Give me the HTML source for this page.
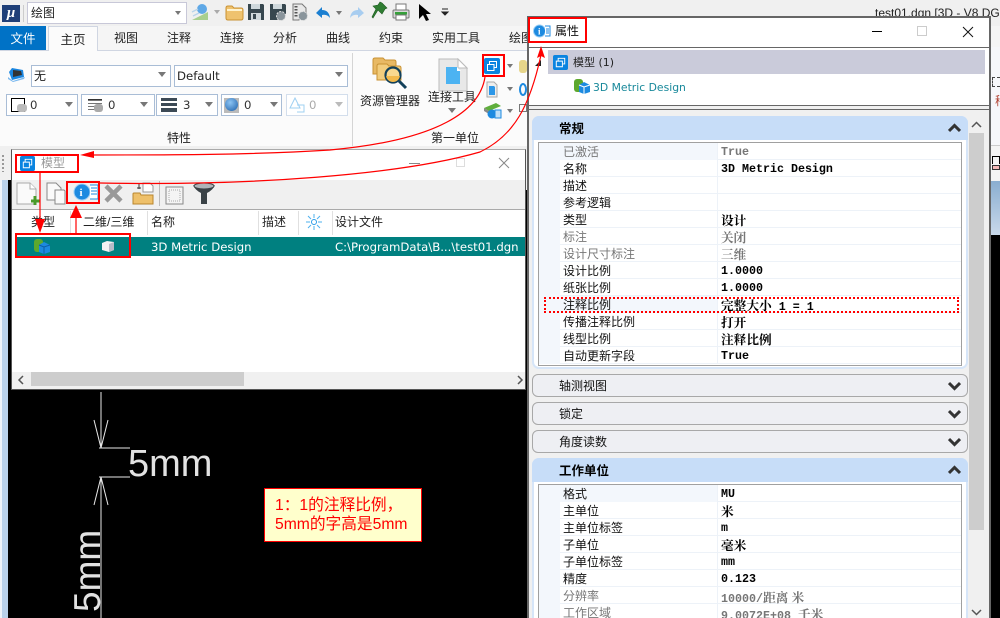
<!DOCTYPE html>
<html><head><meta charset="utf-8">
<style>
html,body{margin:0;padding:0}
body{width:1000px;height:618px;overflow:hidden;position:relative;background:#000;font:12px/17px "DejaVu Sans","Noto Sans CJK SC",sans-serif;color:#222}
.a{position:absolute}
.t{position:absolute;white-space:nowrap;font:12px/16px "Liberation Sans","Noto Sans CJK SC",sans-serif}
.d{font-family:"DejaVu Sans","Noto Sans CJK SC",sans-serif;font-size:11.7px}
.box{position:absolute;background:#fff;border:1px solid #a9bdd6;box-sizing:border-box}
.tri{position:absolute;width:0;height:0;border-left:4px solid transparent;border-right:4px solid transparent;border-top:5px solid #777}
.red{position:absolute;border:2px solid #f00;box-sizing:border-box}
.hd{position:absolute;left:532px;width:436px;height:24px;border-radius:7px 7px 0 0;background:#c7ddf8;font:bold 12.5px/24px "Noto Sans CJK SC",sans-serif;color:#000;text-indent:27px}
.cl{position:absolute;left:532px;width:436px;height:23px;background:#eeeff3;border:1px solid #a8a8a8;border-radius:6px;box-sizing:border-box;font:12px/21px "Noto Sans CJK SC",sans-serif;color:#111;text-indent:26px}
.chev{position:absolute;left:948px}
.tb{position:absolute;left:538px;width:424px;border:1px solid #a0a0a0;box-sizing:border-box;background:#fff;overflow:hidden}
.r{height:17px;position:relative;border-bottom:1px solid #edf2f8;box-sizing:border-box;overflow:visible}
.r:before{content:"";position:absolute;left:0;top:0;width:21px;height:17px;background:#f3f7fc}
.r:after{content:"";position:absolute;left:178px;top:0;width:1px;height:17px;background:#edf2f8}
.r b{position:absolute;left:24px;top:0;font:12px/17px "Noto Sans CJK SC",sans-serif;color:#111;white-space:nowrap}
.r i{position:absolute;left:182px;top:1px;font:bold 11.67px/17px "Liberation Mono",monospace;color:#000;white-space:nowrap;z-index:1}
.r i.c{top:0;font:bold 12.7px/17px "Noto Serif CJK SC",serif}
.r i span{font:bold 12.7px/17px "Noto Serif CJK SC",serif}
.r i.c span{font:bold 11.67px/17px "Liberation Mono",monospace}
.r.g b,.r.g i{color:#777}
.r.s:before{width:178px;background:#f3f7fc}
</style></head>
<body>
<!-- App background -->
<div class="a" style="left:0;top:0;width:1000px;height:26px;background:#f0f0f0"></div>
<div class="a" style="left:0;top:26px;width:1000px;height:24px;background:#f5f5f5"></div>
<div class="a" style="left:0;top:50px;width:1000px;height:96px;background:#fbfbfb;border-top:1px solid #d0d6e2;box-sizing:border-box"></div>
<div class="a" style="left:0;top:146px;width:1000px;height:44px;background:#f0f0f0"></div>
<div class="a" style="left:0;top:180px;width:8px;height:438px;background:#b9d1ea"></div>
<div class="a" style="left:0;top:180px;width:2px;height:438px;background:#eef3f9"></div>
<div class="a" style="left:8px;top:180px;width:6px;height:438px;background:#000"></div>
<div class="a" style="left:2px;top:155px;width:2px;height:17px;background:repeating-linear-gradient(#999 0 2px,transparent 2px 4px)"></div>
<div class="a" style="left:990px;top:47px;width:10px;height:188px;background:#f6f7fa"></div>
<div class="a" style="left:990px;top:145px;width:10px;height:36px;background:#f4f4f4;border-top:1px solid #ccc;box-sizing:border-box"></div>
<div class="a" style="left:990px;top:181px;width:10px;height:54px;background:linear-gradient(#8aaed0,#c9d9ea)"></div>
<div class="a" style="left:992px;top:156px;width:8px;height:8px;border:1px solid #000;border-bottom:0;box-sizing:border-box"></div>
<div class="a" style="left:992px;top:165px;width:8px;height:5px;background:#f3b8b8;border:1px solid #333;box-sizing:border-box"></div>
<div class="a" style="left:992px;top:77px;width:8px;height:10px;border:1px dashed #444;border-right:0;box-sizing:border-box"></div>
<div class="t" style="left:995px;top:93px;color:#b04030">稍</div>
<div class="t" style="left:875px;top:5px;color:#222">test01.dgn [3D - V8 DGN</div>

<!-- Quick access -->
<div class="a" style="left:2px;top:5px;width:18px;height:17px;background:#1f3f78;color:#fff;font:italic bold 15px/16px 'Liberation Serif',serif;text-align:center">μ</div>
<div class="a" style="left:23px;top:5px;width:1px;height:17px;background:#ccc"></div>
<div class="a" style="left:27px;top:2px;width:160px;height:22px;background:#fff;border:1px solid #c8c8d8;box-sizing:border-box"></div>
<div class="t" style="left:31px;top:5px">绘图</div>
<div class="tri" style="left:175px;top:11px;border-left-width:3px;border-right-width:3px;border-top-width:4px"></div>
<svg class="a" style="left:190px;top:0" width="270" height="26" viewBox="0 0 270 26">
<path d="M2 20 L18 20 L18 12 Z" fill="#a9cf8e"/><circle cx="12" cy="9" r="5" fill="#5fa8e6"/><path d="M2 12l6-3M3 16l6-3" stroke="#b9d4ea" stroke-width="1.500"/>
<path d="M24 10h6l-3 4z" fill="#aaa"/>
<path d="M36 8q0-2 2-2h4l2 2h7q2 0 2 2v8q0 2-2 2H38q-2 0-2-2z" fill="#efc26e" stroke="#c99234"/><path d="M37 10h15" stroke="#fff3cf" stroke-width="2"/>
<path d="M58 4h15l1 1v15H58z" fill="#37474f"/><rect x="61" y="4" width="9" height="5" fill="#cfd8dc"/><rect x="61" y="13" width="10" height="7" fill="#cfd8dc"/><rect x="63" y="14" width="3" height="5" fill="#37474f"/>
<path d="M80 4h15l1 1v9h-4l-3 6H80z" fill="#37474f"/><rect x="83" y="4" width="9" height="5" fill="#cfd8dc"/><circle cx="91" cy="16" r="4.500" fill="#8a959c" stroke="#e0e0e0" stroke-dasharray="2 1.2"/>
<path d="M103 4h9l4 4v6h-5l-2 6h-6z" fill="#e8e8e8" stroke="#777"/><path d="M106 6v12" stroke="#555" stroke-dasharray="1.500 1.500" stroke-width="3"/><circle cx="113" cy="16" r="4.500" fill="#8a959c" stroke="#e0e0e0" stroke-dasharray="2 1.2"/>
<path d="M126 13 l6-6v3q7 0 8 8q-3-4-8-3v3z" fill="#1b7fd1"/>
<path d="M146 11h6l-3 4z" fill="#777"/>
<path d="M174 13 l-6-6v3q-7 0-8 8q3-4 8-3v3z" fill="#a8cdf0"/>
<path d="M192 3 l5 5-2 1-3 5-4-4-5 8-1-1 4-8-3-3 5-1 2-3z" fill="#2f7d32" stroke="#1d5a20" stroke-width=".6"/>
<rect x="206" y="4" width="10" height="6" fill="#fff" stroke="#777"/><rect x="203" y="10" width="16" height="8" rx="1" fill="#d8d8d8" stroke="#777"/><rect x="205" y="12" width="12" height="2.500" fill="#35a03a"/><rect x="206" y="15" width="10" height="5" fill="#fff" stroke="#777"/>
<path d="M229 4 v15 l4-4 3 6 3-1-3-6h5z" fill="#000"/>
<path d="M252 9h6M252 12h6l-3 3z" stroke="#222" fill="#222"/>
</svg>

<!-- Tabs -->
<div class="a" style="left:0;top:26px;width:46px;height:24px;background:#0072c6;color:#fff;font:12.500px/24px 'Noto Sans CJK SC',sans-serif;text-align:center">文件</div>
<div class="a" style="left:48px;top:26px;width:50px;height:25px;background:#fbfbfb;border:1px solid #d0d6e2;border-bottom:0;box-sizing:border-box;font:12.500px/23px 'Noto Sans CJK SC',sans-serif;text-align:center;color:#222">主页</div>
<div class="t" style="left:114px;top:30px">视图</div>
<div class="t" style="left:167px;top:30px">注释</div>
<div class="t" style="left:220px;top:30px">连接</div>
<div class="t" style="left:273px;top:30px">分析</div>
<div class="t" style="left:326px;top:30px">曲线</div>
<div class="t" style="left:379px;top:30px">约束</div>
<div class="t" style="left:432px;top:30px">实用工具</div>
<div class="t" style="left:509px;top:30px">绘图</div>

<!-- Ribbon -->
<svg class="a" style="left:8px;top:67px" width="18" height="16" viewBox="0 0 18 16"><path d="M4 1l11 2 1 7-12 3-3-8z" fill="#1a86e0"/><path d="M5 3l8 1 1 4-9 2z" fill="#333"/><path d="M0 10l5 4 12-4-1 2-11 3-5-3z" fill="#7ab8ef"/></svg>
<div class="box" style="left:31px;top:65px;width:140px;height:22px"></div>
<div class="t" style="left:34px;top:68px">无</div>
<div class="tri" style="left:158px;top:72px"></div>
<div class="box" style="left:174px;top:65px;width:174px;height:22px"></div>
<div class="t d" style="left:177px;top:68px">Default</div>
<div class="tri" style="left:335px;top:72px"></div>

<div class="box" style="left:6px;top:94px;width:72px;height:22px"></div>
<div class="a" style="left:11px;top:98px;width:14px;height:14px;border:1px solid #000;box-sizing:border-box;background:#fff"></div>
<div class="a" style="left:17px;top:104px;width:10px;height:8px;background:#bbb;border-radius:3px"></div>
<div class="t d" style="left:30px;top:97px;color:#333">0</div><div class="tri" style="left:65px;top:102px"></div>
<div class="box" style="left:81px;top:94px;width:74px;height:22px"></div>
<div class="a" style="left:88px;top:99px;width:14px;height:12px;border-top:1px solid #333;background:repeating-linear-gradient(#777 0 1px,transparent 1px 3px)"></div>
<div class="a" style="left:94px;top:104px;width:9px;height:8px;background:#aaa;border-radius:3px"></div>
<div class="t d" style="left:108px;top:97px;color:#333">0</div><div class="tri" style="left:140px;top:102px"></div>
<div class="box" style="left:156px;top:94px;width:62px;height:22px"></div>
<div class="a" style="left:161px;top:98px;width:16px;height:3px;background:#3c4a55"></div>
<div class="a" style="left:161px;top:103px;width:16px;height:3px;background:#3c4a55"></div>
<div class="a" style="left:161px;top:108px;width:16px;height:4px;background:#3c4a55"></div>
<div class="t d" style="left:183px;top:97px;color:#333">3</div><div class="tri" style="left:205px;top:102px"></div>
<div class="box" style="left:221px;top:94px;width:61px;height:22px"></div>
<div class="a" style="left:224px;top:98px;width:15px;height:15px;background:#bbb"></div>
<div class="a" style="left:225px;top:98px;width:13px;height:13px;border-radius:50%;background:radial-gradient(circle at 40% 35%,#8cc4f4,#1c5fa8)"></div>
<div class="t d" style="left:244px;top:97px;color:#333">0</div><div class="tri" style="left:270px;top:102px"></div>
<div class="box" style="left:286px;top:94px;width:62px;height:22px;border-color:#d3deec"></div>
<svg class="a" style="left:289px;top:97px" width="16" height="16" viewBox="0 0 16 16"><path d="M6 1 L11 11 H1 Z" fill="none" stroke="#9fd0f2"/><path d="M8 8h7v7H8" fill="none" stroke="#9fd0f2"/></svg>
<div class="t d" style="left:309px;top:97px;color:#aaa">0</div><div class="tri" style="left:335px;top:102px;border-top-color:#bbb"></div>
<div class="t" style="left:167px;top:130px">特性</div>
<div class="a" style="left:352px;top:53px;width:1px;height:93px;background:#d5d5d5"></div>

<svg class="a" style="left:372px;top:56px" width="36" height="36" viewBox="0 0 36 36">
<path d="M1 4q0-2 2-2h8l2 2h9q2 0 2 2v12H1z" fill="#e8b964" stroke="#c99234"/>
<path d="M5 10q0-2 2-2h8l2 2h10q2 0 2 2v12H5z" fill="#f2cd7d" stroke="#c99234"/>
<circle cx="21" cy="19" r="7.500" fill="#f8d88f" stroke="#12405a" stroke-width="2.200"/><path d="M14 20h14v-1a7 7 0 0 1-14 0z" fill="#f2b94c"/>
<path d="M27 25l7 7" stroke="#12405a" stroke-width="3"/></svg>
<div class="t" style="left:360px;top:93px">资源管理器</div>
<svg class="a" style="left:438px;top:58px" width="30" height="34" viewBox="0 0 30 34"><path d="M1 1h19l9 9v23H1z" fill="#e8e8e8" stroke="#bbb"/><path d="M20 1v9h9z" fill="#fff" stroke="#bbb"/><path d="M8 9h11l3 3v14H8z" fill="#4cb3f2"/><path d="M19 9v4h4z" fill="#fff"/></svg>
<div class="t" style="left:428px;top:89px">连接工具</div>
<div class="tri" style="left:448px;top:108px"></div>
<svg class="a" style="left:484px;top:58px" width="16" height="16" viewBox="0 0 16 16"><rect width="16" height="16" rx="2" fill="#0a84e0"/><path d="M3.500 6.500h6.500v6H3.500zM5.500 6.500V3.500h7v6h-2.500" fill="none" stroke="#fff"/></svg>
<div class="tri" style="left:507px;top:64px;border-left-width:3px;border-right-width:3px;border-top-width:4px"></div>
<svg class="a" style="left:486px;top:81px" width="12" height="17" viewBox="0 0 12 17"><path d="M1 1h7l3 3v12H1z" fill="#eee" stroke="#aaa"/><path d="M3 5h5l1 1v8H3z" fill="#2c97e8"/></svg>
<div class="tri" style="left:507px;top:87px;border-left-width:3px;border-right-width:3px;border-top-width:4px"></div>
<svg class="a" style="left:484px;top:103px" width="18" height="16" viewBox="0 0 18 16"><path d="M0 5L12 0l5 3L5 8z" fill="#5fae3c"/><path d="M0 5l5 3v3L0 8z" fill="#888"/><circle cx="8" cy="11" r="4.500" fill="#1c8ae0"/><rect x="11" y="7" width="6" height="8" fill="#bfe0f8" stroke="#1c8ae0"/></svg>
<div class="tri" style="left:507px;top:109px;border-left-width:3px;border-right-width:3px;border-top-width:4px"></div>
<div class="a" style="left:519px;top:60px;width:8px;height:13px;background:#e6d58a;border-radius:3px"></div>
<div class="a" style="left:519px;top:83px;width:8px;height:13px;border:2px solid #1c8ae0;border-radius:50%;box-sizing:border-box"></div>
<div class="a" style="left:519px;top:104px;width:8px;height:8px;border:1px solid #777;box-sizing:border-box"></div>
<div class="t" style="left:431px;top:130px">第一单位</div>

<!-- Model window -->
<div class="a" style="left:11px;top:149px;width:515px;height:241px;background:#fff;border:1px solid #555;border-top-color:#aaa;box-sizing:border-box"></div>
<svg class="a" style="left:20px;top:156px" width="15" height="15" viewBox="0 0 16 16"><rect width="16" height="16" rx="2" fill="#0a84e0"/><path d="M3.500 6.500h6.500v6H3.500zM5.500 6.500V3.500h7v6h-2.500" fill="none" stroke="#fff"/></svg>
<div class="t" style="left:41px;top:155px;color:#999">模型</div>
<div class="a" style="left:409px;top:163px;width:11px;height:1px;background:#888"></div>
<div class="a" style="left:456px;top:158px;width:9px;height:9px;border:1px solid #ddd;box-sizing:border-box"></div>
<svg class="a" style="left:498px;top:157px" width="12" height="12"><path d="M1 1l10 10M11 1L1 11" stroke="#888" fill="none"/></svg>
<div class="a" style="left:12px;top:180px;width:513px;height:29px;background:#f0f0f0;border-bottom:1px solid #aaa"></div>
<svg class="a" style="left:14px;top:181px" width="210" height="26" viewBox="0 0 210 26">
<path d="M3 2h13l6 6v15H3z" fill="#fafafa" stroke="#aaa"/><path d="M16 2v6h6" fill="#fff" stroke="#aaa"/><path d="M21 15v9M17 20h9" stroke="#4a9a2a" stroke-width="3"/>
<path d="M33 2h9l5 5v12H33z" fill="#fafafa" stroke="#888"/><path d="M41 9h9l1 1v13H41z" fill="#fafafa" stroke="#888"/>
<circle cx="68" cy="11" r="8" fill="#1c8ae0" stroke="#9ccff5"/><text x="65.500" y="15" font-family="Liberation Serif" font-weight="bold" font-size="11" fill="#fff">i</text><path d="M76 4h8v14h-8" fill="#fff" stroke="#1c8ae0"/><path d="M77 7h6M77 10h6M77 13h6" stroke="#1c8ae0"/>
<path d="M92 5l15 15M107 5L92 20" stroke="#999" stroke-width="4.500"/>
<path d="M119 13q0-1 1-1h6l1 2h12v9h-20z" fill="#eec06a" stroke="#b9862e"/><path d="M129 2h7l3 3v6h-10z" fill="#fff" stroke="#999"/><path d="M125 3v5M123 7h4" stroke="#333" fill="none"/>
<path d="M145.500 0v25" stroke="#bbb"/>
<rect x="152" y="6" width="17" height="17" fill="#f4f4f4" stroke="#888"/><rect x="155" y="9" width="11" height="11" fill="none" stroke="#aaa" stroke-dasharray="1 1"/>
<path d="M179 4q11 6 22 0q-2 5-8 8v11h-6V12q-6-3-8-8z" fill="#3a4247"/><ellipse cx="190" cy="5" rx="10" ry="3" fill="#aeb4b8" stroke="#3a4247"/>
</svg>
<div class="a" style="left:12px;top:210px;width:513px;height:26px;background:#fff"></div>
<div class="t" style="left:31px;top:214px">类型</div>
<div class="t" style="left:83px;top:214px">二维/三维</div>
<div class="t" style="left:151px;top:214px">名称</div>
<div class="t" style="left:262px;top:214px">描述</div>
<div class="t" style="left:335px;top:214px">设计文件</div>
<svg class="a" style="left:306px;top:214px" width="16" height="16" viewBox="0 0 16 16"><circle cx="8" cy="8" r="2.500" fill="none" stroke="#2a9ce8"/><path d="M8 0v4M8 12v4M0 8h4M12 8h4M2 2l3 3M11 11l3 3M14 2l-3 3M5 11l-3 3" stroke="#4eb1ee"/></svg>
<div class="a" style="left:70px;top:211px;width:1px;height:24px;background:#e0e0e0"></div>
<div class="a" style="left:147px;top:211px;width:1px;height:24px;background:#e0e0e0"></div>
<div class="a" style="left:258px;top:211px;width:1px;height:24px;background:#e0e0e0"></div>
<div class="a" style="left:298px;top:211px;width:1px;height:24px;background:#e0e0e0"></div>
<div class="a" style="left:332px;top:211px;width:1px;height:24px;background:#e0e0e0"></div>
<div class="a" style="left:16px;top:237px;width:509px;height:19px;background:#008080"></div>
<svg class="a" style="left:33px;top:238px" width="18" height="16" viewBox="0 0 18 16"><rect x="1" y="1" width="9" height="13" rx="3" fill="#5da82e"/><path d="M6 7l5-3 6 3v7l-6 2-5-2z" fill="#1c8ae0"/><path d="M6 7l5 2 6-2M11 9v7" stroke="#0b5ea8" fill="none"/></svg>
<svg class="a" style="left:101px;top:240px" width="14" height="13" viewBox="0 0 14 13"><path d="M1 3l5-2 7 1v8l-5 2-7-2z" fill="#f2f2f2"/><path d="M8 4l5-2v8l-5 2z" fill="#b8bcc8"/></svg>
<div class="t d" style="left:151px;top:239px;color:#fff">3D Metric Design</div>
<div class="t d" style="left:335px;top:239px;color:#fff">C:\ProgramData\B...\test01.dgn</div>
<!-- scrollbar -->
<div class="a" style="left:12px;top:372px;width:513px;height:17px;background:#f0f0f0"></div>
<div class="a" style="left:31px;top:372px;width:213px;height:14px;background:#cdcdcd"></div>
<svg class="a" style="left:16px;top:375px" width="10" height="10"><path d="M7 1L3 5l4 4" stroke="#555" stroke-width="1.500" fill="none"/></svg>
<svg class="a" style="left:515px;top:375px" width="10" height="10"><path d="M3 1l4 4-4 4" stroke="#555" stroke-width="1.500" fill="none"/></svg>

<!-- Drawing -->
<svg class="a" style="left:8px;top:390px" width="518" height="228" viewBox="8 390 518 228">
<path d="M101 392V448M101 477V618" stroke="#e8e8e8"/>
<path d="M94 420l7 28 7-28M94 505l7-28 7 28" stroke="#e8e8e8" fill="none"/>
<path d="M99 448h31M99 477h31" stroke="#e8e8e8"/>
<text x="128" y="476" font-family="Liberation Sans" font-size="38" fill="#e2e2e2">5mm</text>
<text transform="translate(100,612) rotate(-90)" font-family="Liberation Sans" font-size="37" fill="#e2e2e2">5mm</text>
</svg>
<div class="a" style="left:264px;top:488px;width:158px;height:54px;background:#ffffcc;border:1px solid #f00;box-sizing:border-box"></div>
<div class="t" style="left:275px;top:496px;color:#f00;font-size:15.7px;line-height:19px">1：1的注释比例，<br>5mm的字高是5mm</div>

<!-- Properties window -->
<div class="a" style="left:527px;top:16px;width:464px;height:602px;background:#fff;border:2px solid #666;border-bottom:0;box-sizing:border-box"></div>
<div class="a" style="left:529px;top:47px;width:460px;height:1px;background:#666"></div>
<svg class="a" style="left:533px;top:24px" width="18" height="14" viewBox="0 0 18 14"><circle cx="6.500" cy="7" r="6" fill="#1c8ae0" stroke="#9ccff5"/><text x="5" y="10.500" font-family="Liberation Serif" font-weight="bold" font-size="9" fill="#fff">i</text><path d="M12 2h5v10h-5" fill="#fff" stroke="#1c8ae0"/><path d="M13 5h3M13 7h3M13 9h3" stroke="#1c8ae0"/></svg>
<div class="t" style="left:555px;top:23px;color:#111">属性</div>
<div class="a" style="left:872px;top:31px;width:10px;height:1px;background:#000"></div>
<div class="a" style="left:917px;top:26px;width:10px;height:10px;border:1px solid #ccc;box-sizing:border-box"></div>
<svg class="a" style="left:962px;top:26px" width="12" height="12"><path d="M1 1l10 10M11 1L1 11" stroke="#111" fill="none"/></svg>
<div class="a" style="left:548px;top:50px;width:437px;height:24px;background:#cacbda"></div>
<div class="a" style="left:535px;top:60px;width:0;height:0;border-left:6px solid transparent;border-bottom:6px solid #222"></div>
<svg class="a" style="left:553px;top:55px" width="15" height="15" viewBox="0 0 16 16"><rect width="16" height="16" rx="2" fill="#0a84e0"/><path d="M3.500 6.500h6.500v6H3.500zM5.500 6.500V3.500h7v6h-2.500" fill="none" stroke="#fff"/></svg>
<div class="t d" style="left:573px;top:55px;color:#222;font-size:11px">模型 (1)</div>
<svg class="a" style="left:573px;top:78px" width="18" height="16" viewBox="0 0 18 16"><rect x="1" y="1" width="9" height="13" rx="3" fill="#5da82e"/><path d="M6 7l5-3 6 3v7l-6 2-5-2z" fill="#1c8ae0"/><path d="M6 7l5 2 6-2M11 9v7" stroke="#fff" fill="none"/></svg>
<div class="t d" style="left:593px;top:80px;color:#17889a;font-size:10.8px">3D Metric Design</div>
<div class="a" style="left:529px;top:105px;width:460px;height:5px;background:#f0f0f0;border-top:1px solid #666;border-bottom:1px solid #666;box-sizing:border-box"></div>
<div class="a" style="left:529px;top:110px;width:460px;height:508px;background:#f0f0f0"></div>
<!-- scrollbar -->
<div class="a" style="left:969px;top:133px;width:15px;height:397px;background:#cdcdcd"></div>
<svg class="a" style="left:971px;top:120px" width="11" height="10"><path d="M1 7l4.500-4.500L10 7" stroke="#555" stroke-width="1.500" fill="none"/></svg>
<svg class="a" style="left:971px;top:608px" width="11" height="10"><path d="M1 2l4.500 4.500L10 2" stroke="#555" stroke-width="1.500" fill="none"/></svg>

<!-- Section General -->
<div class="a" style="left:532px;top:116px;width:436px;height:253px;background:#fff;border:2px solid #d6e5f8;border-radius:7px;box-sizing:border-box"></div>
<div class="hd" style="top:116px">常规</div>
<svg class="chev" style="top:122px" width="13" height="11"><path d="M1 9l5.500-5.500L12 9" stroke="#333" stroke-width="3" fill="none"/></svg>
<div class="tb" style="top:142px;height:224px">
<div class="r g s"><b>已激活</b><i>True</i></div>
<div class="r"><b>名称</b><i>3D Metric Design</i></div>
<div class="r"><b>描述</b></div>
<div class="r"><b>参考逻辑</b></div>
<div class="r"><b>类型</b><i class="c">设计</i></div>
<div class="r g"><b>标注</b><i class="c">关闭</i></div>
<div class="r g"><b>设计尺寸标注</b><i class="c">三维</i></div>
<div class="r"><b>设计比例</b><i>1.0000</i></div>
<div class="r"><b>纸张比例</b><i>1.0000</i></div>
<div class="r s"><b>注释比例</b><i class="c">完整大小<span> 1 = 1</span></i></div>
<div class="r"><b>传播注释比例</b><i class="c">打开</i></div>
<div class="r"><b>线型比例</b><i class="c">注释比例</i></div>
<div class="r"><b>自动更新字段</b><i>True</i></div>
</div>
<div class="a" style="left:544px;top:297px;width:415px;height:16px;border:2px dotted #f00;box-sizing:border-box;z-index:3"></div>

<div class="cl" style="top:374px">轴测视图</div>
<svg class="chev" style="top:381px" width="13" height="11"><path d="M1 2l5.500 5.500L12 2" stroke="#333" stroke-width="3" fill="none"/></svg>
<div class="cl" style="top:402px">锁定</div>
<svg class="chev" style="top:409px" width="13" height="11"><path d="M1 2l5.500 5.500L12 2" stroke="#333" stroke-width="3" fill="none"/></svg>
<div class="cl" style="top:430px">角度读数</div>
<svg class="chev" style="top:437px" width="13" height="11"><path d="M1 2l5.500 5.500L12 2" stroke="#333" stroke-width="3" fill="none"/></svg>

<div class="a" style="left:532px;top:458px;width:436px;height:160px;background:#fff;border:2px solid #d6e5f8;border-bottom:0;border-radius:7px 7px 0 0;box-sizing:border-box"></div>
<div class="hd" style="top:458px">工作单位</div>
<svg class="chev" style="top:464px" width="13" height="11"><path d="M1 9l5.500-5.500L12 9" stroke="#333" stroke-width="3" fill="none"/></svg>
<div class="tb" style="top:484px;height:134px;border-bottom:0">
<div class="r s"><b>格式</b><i>MU</i></div>
<div class="r"><b>主单位</b><i class="c">米</i></div>
<div class="r"><b>主单位标签</b><i>m</i></div>
<div class="r"><b>子单位</b><i class="c">毫米</i></div>
<div class="r"><b>子单位标签</b><i>mm</i></div>
<div class="r"><b>精度</b><i>0.123</i></div>
<div class="r g"><b>分辨率</b><i>10000/<span>距离 米</span></i></div>
<div class="r g"><b>工作区域</b><i>9.0072E+08 <span>千米</span></i></div>
</div>

<!-- Red annotations -->
<div class="red" style="left:482px;top:54px;width:23px;height:23px"></div>
<div class="red" style="left:15px;top:154px;width:64px;height:19px"></div>
<div class="red" style="left:66px;top:181px;width:34px;height:23px"></div>
<div class="red" style="left:15px;top:233px;width:116px;height:25px"></div>
<div class="red" style="left:528px;top:17px;width:59px;height:26px"></div>
<svg class="a" style="left:0;top:0;z-index:5" width="1000" height="618" viewBox="0 0 1000 618">
<g fill="none" stroke="#f00" stroke-width="1.200">
<path d="M485 77 C480 110 440 140 330 150 C250 155 170 155 88 155"/>
<path d="M100 183 C250 186 400 175 480 152 C515 135 530 105 541 55"/>
<path d="M40 173V222M76 233V215"/>
</g>
<g fill="#f00">
<path d="M80 155l14-4v7z"/>
<path d="M541 46l-4 12 4-2 4 2z"/>
<path d="M40 233l-5-14h10z"/>
<path d="M76 205l-6 13h12z"/>
</g>
</svg>
</body></html>
